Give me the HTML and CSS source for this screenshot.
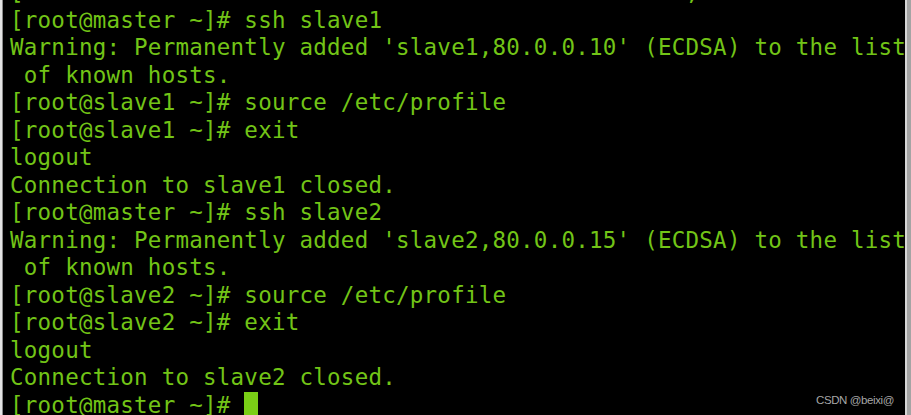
FILE: index.html
```html
<!DOCTYPE html>
<html>
<head>
<meta charset="utf-8">
<link rel="stylesheet" href="styles.css">
</head>
<body>
<div class="frame">
  <div class="edge-left"></div>
  <div class="terminal">
    <pre class="screen"><span class="line">[                                                ,</span>
<span class="line">[root@master ~]# ssh slave1</span>
<span class="line">Warning: Permanently added 'slave1,80.0.0.10' (ECDSA) to the list</span>
<span class="line"> of known hosts.</span>
<span class="line">[root@slave1 ~]# source /etc/profile</span>
<span class="line">[root@slave1 ~]# exit</span>
<span class="line">logout</span>
<span class="line">Connection to slave1 closed.</span>
<span class="line">[root@master ~]# ssh slave2</span>
<span class="line">Warning: Permanently added 'slave2,80.0.0.15' (ECDSA) to the list</span>
<span class="line"> of known hosts.</span>
<span class="line">[root@slave2 ~]# source /etc/profile</span>
<span class="line">[root@slave2 ~]# exit</span>
<span class="line">logout</span>
<span class="line">Connection to slave2 closed.</span>
<span class="line">[root@master ~]# <span class="cursor"> </span></span></pre>
    <div class="watermark">CSDN @beixi@</div>
  </div>
  <div class="edge-right"></div>
</div>
</body>
</html>
```
FILE: styles.css
```css
html, body {
  margin: 0;
  padding: 0;
  background: #000;
  overflow: hidden;
}
.frame {
  display: flex;
  width: 911px;
  height: 415px;
  overflow: hidden;
}
.edge-left {
  width: 2px;
  flex: none;
  background: #e4e4e4;
  border-right: 1px solid #8a8a8a;
}
.edge-right {
  width: 2px;
  flex: none;
  background: #d6d6d6;
  border-right: 4px solid #a4a4a4;
}
.terminal {
  flex: 1;
  position: relative;
  background: #000;
  overflow: hidden;
}
.screen {
  margin: -21px 0 0 7px;
  font-family: "DejaVu Sans Mono", monospace;
  font-size: 22.5px;
  letter-spacing: 0.24px;
  line-height: 27.5px;
  color: #72c417;
  white-space: pre;
}
.cursor {
  display: inline-block;
  width: 14px;
  height: 27.5px;
  vertical-align: top;
  background: #7acf16;
}
.watermark {
  position: absolute;
  right: 11px;
  bottom: 9px;
  font-family: "Liberation Sans", Arial, sans-serif;
  font-size: 11.5px;
  letter-spacing: -0.4px;
  color: #a6a6a6;
}
```
